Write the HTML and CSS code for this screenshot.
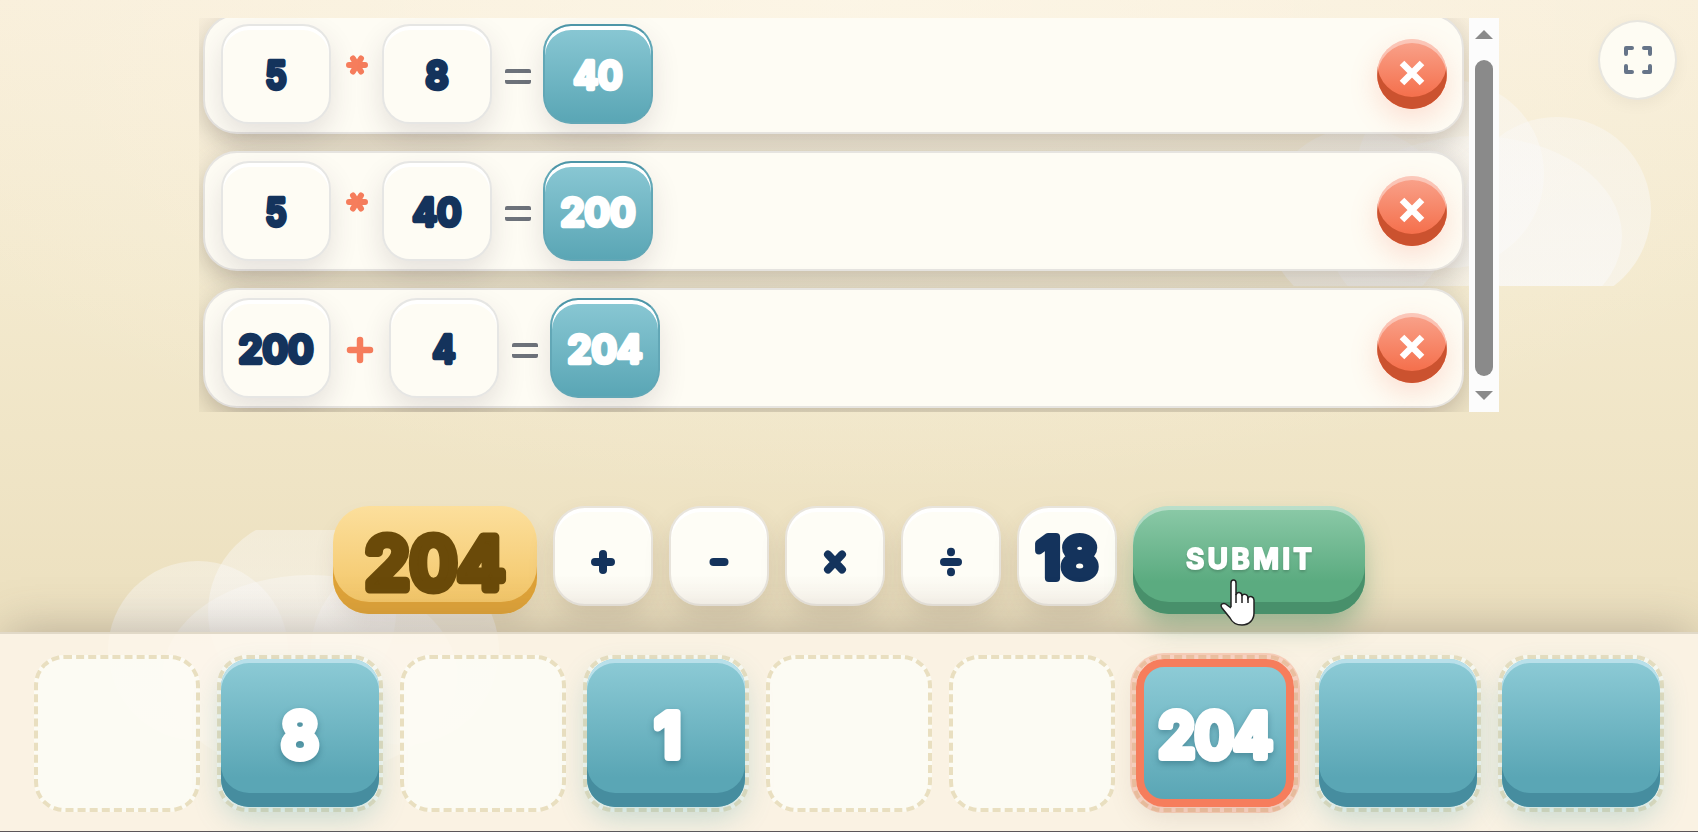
FILE: index.html
```html
<!DOCTYPE html>
<html>
<head>
  <meta charset="utf-8">
  <title>Number Game</title>
  <link rel="stylesheet" href="styles.css">
</head>
<body>

<svg class="clouds" viewBox="0 0 1698 832">
  <defs>
    <clipPath id="cloud-right"><rect x="1250" y="60" width="448" height="226" /></clipPath>
    <clipPath id="cloud-left"><rect x="0" y="530" width="620" height="302" /></clipPath>
    <linearGradient id="puff" x1="0" y1="0" x2="0" y2="1">
      <stop offset="0" stop-color="#faf9f8" stop-opacity="0.4" />
      <stop offset="1" stop-color="#faf9f8" stop-opacity="0.58" />
    </linearGradient>
  </defs>
  <g clip-path="url(#cloud-right)" fill="url(#puff)">
    <circle cx="1450" cy="174" r="94" />
    <circle cx="1557" cy="211" r="94" />
    <ellipse cx="1475" cy="236" rx="147" ry="100" />
    <circle cx="1358" cy="220" r="92" />
  </g>
  <g clip-path="url(#cloud-left)" fill="url(#puff)">
    <circle cx="198" cy="651" r="90" />
    <circle cx="302" cy="612" r="94" />
    <ellipse cx="310" cy="675" rx="147" ry="100" />
    <circle cx="405" cy="651" r="94" />
  </g>
</svg>

<button class="fullscreen">
  <svg width="28" height="28" viewBox="0 0 28 28">
    <path d="M2 8V2H8M20 2H26V8M26 20V26H20M8 26H2V20" />
  </svg>
</button>

<div class="game">
  <div class="history">
    <div class="rows">
      <div class="row">
        <div class="tile"><svg class="num" width="90" height="52"><text x="45" y="41" textLength="21" lengthAdjust="spacingAndGlyphs">5</text></svg></div>
        <div class="op star"><svg width="22" height="20" viewBox="-11 -10 22 20"><path d="M-8 0H8M-4 -6.5L4 6.5M4 -6.5L-4 6.5" /></svg></div>
        <div class="tile"><svg class="num" width="90" height="52"><text x="45" y="41" textLength="23" lengthAdjust="spacingAndGlyphs">8</text></svg></div>
        <div class="equals"></div>
        <div class="tile result"><svg class="num" width="90" height="52"><text x="45" y="41" textLength="49" lengthAdjust="spacingAndGlyphs">40</text></svg></div>
        <button class="remove"><svg width="26" height="26" viewBox="0 0 26 26"><path d="M3 3L23 23M23 3L3 23" /></svg></button>
      </div>
      <div class="row">
        <div class="tile"><svg class="num" width="90" height="52"><text x="45" y="41" textLength="21" lengthAdjust="spacingAndGlyphs">5</text></svg></div>
        <div class="op star"><svg width="22" height="20" viewBox="-11 -10 22 20"><path d="M-8 0H8M-4 -6.5L4 6.5M4 -6.5L-4 6.5" /></svg></div>
        <div class="tile"><svg class="num" width="90" height="52"><text x="45" y="41" textLength="49" lengthAdjust="spacingAndGlyphs">40</text></svg></div>
        <div class="equals"></div>
        <div class="tile result"><svg class="num" width="90" height="52"><text x="45" y="41" textLength="75" lengthAdjust="spacingAndGlyphs">200</text></svg></div>
        <button class="remove"><svg width="26" height="26" viewBox="0 0 26 26"><path d="M3 3L23 23M23 3L3 23" /></svg></button>
      </div>
      <div class="row">
        <div class="tile"><svg class="num" width="90" height="52"><text x="45" y="41" textLength="75" lengthAdjust="spacingAndGlyphs">200</text></svg></div>
        <div class="op plus"><svg width="28" height="28" viewBox="-14 -14 28 28"><path d="M-10 0H10M0 -10V10" /></svg></div>
        <div class="tile"><svg class="num" width="90" height="52"><text x="45" y="41" textLength="23" lengthAdjust="spacingAndGlyphs">4</text></svg></div>
        <div class="equals"></div>
        <div class="tile result"><svg class="num" width="90" height="52"><text x="45" y="41" textLength="75" lengthAdjust="spacingAndGlyphs">204</text></svg></div>
        <button class="remove"><svg width="26" height="26" viewBox="0 0 26 26"><path d="M3 3L23 23M23 3L3 23" /></svg></button>
      </div>
    </div>
    <div class="scrollbar">
      <div class="arrow-up"></div>
      <div class="thumb"></div>
      <div class="arrow-down"></div>
    </div>
  </div>

  <div class="controls">
    <div class="target"><svg class="num num-xl" width="180" height="96"><text x="90" y="77" textLength="140" lengthAdjust="spacingAndGlyphs">204</text></svg></div>
    <button class="operator"><svg width="30" height="30" viewBox="-15 -15 30 30"><path d="M-8 0H8M0 -8V8" /></svg></button>
    <button class="operator"><svg width="30" height="30" viewBox="-15 -15 30 30"><path d="M-5.5 0H5.5" /></svg></button>
    <button class="operator"><svg width="30" height="30" viewBox="-15 -15 30 30"><path d="M-7 -7.5L7 7.5M7 -7.5L-7 7.5" /></svg></button>
    <button class="operator"><svg width="30" height="34" viewBox="-15 -17 30 34"><path d="M-7 0H7M0 -10.2V-9.8M0 9.8V10.2" /></svg></button>
    <div class="operator"><svg class="num num-lg" width="90" height="76"><text x="45" y="60" textLength="61" lengthAdjust="spacing">18</text></svg></div>
    <button class="submit">
      <svg class="label" width="140" height="40"><text x="70" y="31" textLength="126" lengthAdjust="spacing">SUBMIT</text></svg>
      <svg class="cursor" width="36" height="48" viewBox="0 0 36 48">
        <path d="M11 28V4C11 0 16 0 16 4V16C17 12 22 13 22 17C23 14 28 15 28 19C30 16 34 18 34 21V34C34 41 29 46 22 46C16 46 12 43 10 39L2 29C-1 25 4 23 7 26L11 29" />
        <path d="M16 15V24M22 16V24M28 18V24" />
      </svg>
    </button>
  </div>

  <div class="tray">
    <div class="slot"></div>
    <div class="slot"><div class="card"><svg class="num num-md" width="130" height="80"><text x="65" y="64" textLength="37" lengthAdjust="spacingAndGlyphs">8</text></svg></div></div>
    <div class="slot"></div>
    <div class="slot"><div class="card"><svg class="num num-md" width="130" height="80"><text x="67" y="64" textLength="26" lengthAdjust="spacingAndGlyphs">1</text></svg></div></div>
    <div class="slot"></div>
    <div class="slot"></div>
    <div class="slot"><div class="card selected"><svg class="num num-md" width="130" height="80"><text x="65.5" y="64" textLength="114" lengthAdjust="spacingAndGlyphs">204</text></svg></div></div>
    <div class="slot"><div class="card"></div></div>
    <div class="slot"><div class="card"></div></div>
  </div>
</div>

</body>
</html>
```

FILE: styles.css
```css
* {
  box-sizing: border-box;
}

body {
  margin: 0;
  height: 832px;
  overflow: hidden;
  font-family: Inter, "Open Sans", sans-serif;
  background: radial-gradient(ellipse 1100px 500px at 50% 0, rgba(255, 250, 238, 0.6), rgba(255, 250, 238, 0)),
    linear-gradient(#f8eed9, #f3e9cd 35%, #ece0bf 75%);
}

button {
  border: 0;
  padding: 0;
  font: inherit;
}

.clouds {
  position: absolute;
  left: 0;
  top: 0;
  width: 1698px;
  height: 832px;
}

.fullscreen {
  position: absolute;
  top: 20px;
  right: 21px;
  width: 79px;
  height: 80px;
  display: flex;
  align-items: center;
  justify-content: center;
  border-radius: 50%;
  border: 2px solid #e8e6df;
  background: #fefcf3;
  box-shadow: 0 4px 16px rgba(0, 0, 0, 0.05);
}

.fullscreen path {
  fill: none;
  stroke: #667488;
  stroke-width: 4;
  stroke-linecap: round;
  stroke-linejoin: round;
}

.game {
  position: relative;
  height: 832px;
  padding-top: 18px;
  display: flex;
  flex-direction: column;
}

/* numbers */

.num text {
  font-weight: 600;
  font-size: 38px;
  text-anchor: middle;
  fill: #14335c;
  stroke: #14335c;
  stroke-width: 4.5px;
  stroke-linejoin: round;
}

.result .num text,
.card .num text {
  fill: #fff;
  stroke: #fff;
}

.num-md text {
  font-size: 61px;
  stroke-width: 8px;
}

.num-lg text {
  font-size: 56px;
  stroke-width: 8px;
}

.num-xl text {
  font-size: 72px;
  stroke-width: 9px;
}

.target .num text {
  fill: #6a4a09;
  stroke: #6a4a09;
}

/* equation list */

.history {
  display: flex;
  width: 1300px;
  height: 394px;
  margin: 0 auto;
  overflow: hidden;
}

.rows {
  flex: 1;
  display: flex;
  flex-direction: column;
  gap: 17px;
  margin-top: -4px;
  padding: 0 5px 0 4px;
}

.row {
  flex: none;
  height: 120px;
  display: flex;
  align-items: center;
  padding: 0 15px 0 16px;
  border: 2px solid #e6e4e0;
  border-radius: 34px;
  background: #fefcf4;
  box-shadow: 0 8px 28px rgba(80, 68, 60, 0.3);
}

.tile {
  width: 110px;
  height: 100px;
  display: flex;
  align-items: center;
  justify-content: center;
  border: 2px solid #e6e6e4;
  border-radius: 28px;
  background: #fefcf4;
  box-shadow: inset 0 4px 0 #fff, 0 12px 28px rgba(60, 50, 60, 0.13);
}

.result {
  border-color: #62a7b6;
  border-top-color: #4e96a8;
  background: linear-gradient(#8ac8d4, #5aa6b5);
  box-shadow: inset 0 4px 0 #fff, 0 12px 28px rgba(60, 50, 60, 0.13);
}

.op {
  display: flex;
  justify-content: center;
}

.op path {
  fill: none;
  stroke: #f67d5c;
  stroke-width: 6;
  stroke-linecap: round;
}

.star {
  width: 51px;
  padding-bottom: 19px;
}

.plus {
  width: 58px;
  padding-top: 4px;
}

.plus path {
  stroke-width: 6.5;
}

.equals {
  width: 26px;
  height: 15px;
  margin: 4px 12px 0 13px;
  border: solid #6d727a;
  border-width: 4px 0;
  border-radius: 2px;
}

.remove {
  width: 70px;
  height: 70px;
  margin-left: auto;
  padding-bottom: 2px;
  display: flex;
  align-items: center;
  justify-content: center;
  border-radius: 50%;
  background: linear-gradient(#f9a48d, #f5714e 80%);
  box-shadow: inset 0 4px 0 rgba(255, 255, 255, 0.4), inset 0 -12px 0 #cb522f, 0 10px 28px rgba(245, 120, 85, 0.22);
}

.remove path {
  fill: none;
  stroke: #fff;
  stroke-width: 6.5;
}

.scrollbar {
  width: 30px;
  display: flex;
  flex-direction: column;
  align-items: center;
  padding: 12px 0;
  background: #fcfcfc;
}

.arrow-up,
.arrow-down {
  border: 9px solid transparent;
  border-top-width: 0;
  border-bottom: 9px solid #8a8a8a;
}

.arrow-down {
  transform: rotate(180deg);
}

.thumb {
  flex: 1;
  width: 18px;
  margin: 21px 0 15px;
  border-radius: 9px;
  background: #8a8a8a;
}

/* current equation */

.controls {
  display: flex;
  justify-content: center;
  gap: 16px;
  height: 108px;
  margin-top: 94px;
}

.target {
  width: 204px;
  display: flex;
  align-items: center;
  justify-content: center;
  border-radius: 36px;
  background: linear-gradient(#fcdf9c, #f3c668 90%);
  box-shadow: inset 0 -12px 0 #dfa338, 0 12px 24px -4px rgba(80, 60, 50, 0.12);
}

.operator {
  width: 100px;
  height: 100px;
  display: flex;
  align-items: center;
  justify-content: center;
  padding-top: 12px;
  border: 2px solid #e8e4dc;
  border-radius: 32px;
  background: linear-gradient(#fefdf6 70%, #f8f4ec);
  box-shadow: inset 0 4px 0 #fff, 0 14px 28px -2px rgba(80, 65, 50, 0.16);
}

div.operator {
  padding: 0;
}

.operator path {
  fill: none;
  stroke: #14335c;
  stroke-width: 8;
  stroke-linecap: round;
}

.submit {
  position: relative;
  width: 232px;
  border-radius: 36px;
  background: linear-gradient(#8ccaa8, #5bab80 70%);
  box-shadow: inset 0 4px 0 rgba(255, 255, 255, 0.4), inset 0 -12px 0 #48906b, 0 14px 28px -4px rgba(70, 140, 100, 0.5);
}

.label text {
  font-weight: 700;
  font-size: 28px;
  text-anchor: middle;
  fill: #fff;
  stroke: #fff;
  stroke-width: 1.8px;
  stroke-linejoin: round;
}

.label {
  filter: drop-shadow(0 2px 1px rgba(0, 0, 0, 0.15));
}

.cursor {
  position: absolute;
  left: 87px;
  top: 73px;
  fill: #fff;
  stroke: #222;
  stroke-width: 1.5;
}

/* tray */

.tray {
  height: 200px;
  margin-top: 18px;
  padding: 21px 34px 0;
  display: flex;
  justify-content: space-between;
  border-top: 2px solid #e1d9c8;
  border-bottom: 1px solid #5c5658;
  background: rgba(253, 245, 233, 0.84);
  box-shadow: 0 -8px 44px -6px rgba(90, 78, 74, 0.35);
}

.slot {
  width: 166px;
  height: 157px;
  padding: 1px;
  border: 4px dashed #e9dfc0;
  border-radius: 30px;
  background: rgba(253, 252, 246, 0.8);
}

.card {
  width: 158px;
  height: 148px;
  margin: -1px;
  display: flex;
  align-items: center;
  justify-content: center;
  border-radius: 28px;
  background: linear-gradient(#8dcbd6, #5aa6b5 80%);
  box-shadow: inset 0 4px 0 #b9e0ea, inset 0 -14px 0 #468d9f, 0 12px 30px -2px rgba(80, 160, 165, 0.32);
}

.card .num {
  filter: drop-shadow(0 3px 3px rgba(0, 50, 70, 0.3));
}

.selected {
  border: 8px solid #f67d5c;
  background: linear-gradient(#8dcbd6, #5aa6b5);
  box-shadow: 0 0 0 6px rgba(246, 125, 92, 0.3), 0 10px 28px rgba(120, 100, 80, 0.15);
}
```
